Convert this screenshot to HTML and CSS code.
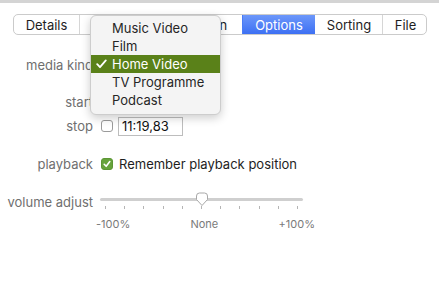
FILE: index.html
```html
<!DOCTYPE html>
<html lang="en">
<head>
  <meta charset="UTF-8">
  <title>Options</title>
  <link rel="stylesheet" href="styles.css">
</head>
<body>

  <div class="topbar"></div>

  <div class="panel">
    <div class="tabs">
      <div class="tab">Details</div>
      <div class="tab">Video</div>
      <div class="tab">Description</div>
      <div class="tab active">Options</div>
      <div class="tab">Sorting</div>
      <div class="tab">File</div>
    </div>

    <div class="form">
      <div class="row row-kind">
        <label class="lbl">media kind</label>
        <div class="popup-btn">Home Video</div>
      </div>

      <div class="row row-start">
        <label class="lbl">start</label>
        <div class="ctrl">
          <span class="check"></span>
          <input class="time" type="text" value="0:00">
        </div>
      </div>

      <div class="row row-stop">
        <label class="lbl">stop</label>
        <div class="ctrl">
          <span class="check"></span>
          <input class="time" type="text" value="11:19,83">
        </div>
      </div>

      <div class="row row-playback">
        <label class="lbl">playback</label>
        <div class="ctrl">
          <span class="check on">
            <svg width="12" height="12" viewBox="0 0 12 12"><path d="M3.2 6.3 L5.2 8.3 L8.8 3.6" fill="none" stroke="#fff" stroke-width="1.6" stroke-linecap="round" stroke-linejoin="round"/></svg>
          </span>
          <span class="opt">Remember playback position</span>
        </div>
      </div>

      <div class="row row-volume">
        <label class="lbl">volume adjust</label>
        <div class="slider">
          <div class="track"></div>
          <div class="ticks">
            <i></i><i></i><i></i><i></i><i></i><i></i><i></i><i></i><i></i><i></i><i></i>
          </div>
          <svg class="knob" width="14" height="15" viewBox="0 0 14 15">
            <path d="M1.5 4 Q1.5 1 4.5 1 L9.5 1 Q12.5 1 12.5 4 L12.5 7.5 L7 13.5 L1.5 7.5 Z" fill="#fff" stroke="#a8a8a8" stroke-width="1"/>
          </svg>
          <div class="scale">
            <span>-100%</span>
            <span>None</span>
            <span>+100%</span>
          </div>
        </div>
      </div>
    </div>

    <!-- open popup menu of media kind -->
    <div class="menu">
      <div class="item">Music Video</div>
      <div class="item">Film</div>
      <div class="item sel">
        <svg class="tick" width="11" height="10" viewBox="0 0 11 10"><path d="M1.2 5.2 L4 8.2 L9.8 1.4" fill="none" stroke="#fff" stroke-width="1.8" stroke-linecap="round" stroke-linejoin="round"/></svg>Home Video
      </div>
      <div class="item">TV Programme</div>
      <div class="item">Podcast</div>
    </div>
  </div>

</body>
</html>
```

FILE: styles.css
```css
body {
  margin: 0;
  background: #fff;
  font-family: Inter, "Liberation Sans", sans-serif;
  font-size: 13px;
  color: #222;
}
.topbar { height: 3px; background: #d4d4d4; }
.panel { position: relative; padding-top: 11px; }

.tabs {
  display: grid;
  grid-template-columns: 65px 62px 101px 73px 67px 46px;
  margin-left: 13px;
  width: 414px;
  height: 21px;
  border: 1px solid #cbcbcb;
  border-radius: 5px;
  box-sizing: border-box;
  overflow: hidden;
}
.tab {
  display: flex;
  align-items: center;
  justify-content: center;
  border-left: 1px solid #d6d6d6;
  color: #1e1e1e;
}
.tab:first-child { border-left: none; }
.tab.active {
  background: linear-gradient(#6c97fa, #3d70f3);
  color: #fff;
  border-left-color: #4a7cf6;
}
.tab.active + .tab { border-left-color: transparent; }

.form { display: flex; flex-direction: column; }
.row {
  display: grid;
  grid-template-columns: 93px 1fr;
  column-gap: 8px;
  align-items: center;
}
.lbl { text-align: right; color: #6f6f6f; }
.ctrl { display: flex; align-items: center; gap: 5px; }

.row-kind { margin-top: 19px; height: 22px; }
.row-start { margin-top: 16px; height: 20px; }
.row-stop { margin-top: 4px; height: 20px; }
.row-playback { margin-top: 18px; height: 20px; }
.row-volume { margin-top: 17px; align-items: start; }
.row-volume .lbl { margin-top: 3px; }

.popup-btn {
  width: 110px;
  height: 20px;
  border: 1px solid #ccc;
  border-radius: 5px;
}

.check {
  width: 12px;
  height: 12px;
  box-sizing: border-box;
  border: 1px solid #9b9b9b;
  border-radius: 3px;
  background: #fff;
  display: inline-flex;
}
.check.on { background: #66a33c; border-color: #5c9634; }
.check svg { display: block; margin: -1px; }

.time {
  width: 65px;
  height: 19px;
  box-sizing: border-box;
  border: 1px solid #bdbdbd;
  padding: 0 3px;
  font: inherit;
  color: #111;
  outline: none;
}
.opt { margin-left: 1px; color: #1e1e1e; }

.slider { position: relative; width: 203px; height: 44px; margin-left: -1px; }
.track {
  margin-top: 7px;
  height: 3px;
  border-radius: 2px;
  background: #cfcfcf;
}
.ticks {
  display: flex;
  justify-content: space-between;
  margin: 5px 5px 0;
}
.ticks i { width: 1px; height: 3px; background: #b5b5b5; }
.knob { position: absolute; left: 95px; top: 1px; }
.scale {
  display: flex;
  justify-content: space-between;
  margin: 8px -12px 0 -4px;
  font-size: 11px;
  color: #7a7a7a;
}

.menu {
  position: absolute;
  left: 90px;
  top: 12px;
  width: 131px;
  padding: 3px 0 5px;
  box-sizing: border-box;
  background: #f4f4f4;
  border: 1px solid #cdcdcd;
  border-radius: 6px;
  box-shadow: 0 3px 10px rgba(0, 0, 0, 0.2);
}
.item {
  position: relative;
  height: 18px;
  line-height: 18px;
  padding-left: 21px;
  color: #262626;
}
.item.sel { background: #5a8119; color: #fff; }
.tick { position: absolute; left: 5px; top: 4px; }
```
